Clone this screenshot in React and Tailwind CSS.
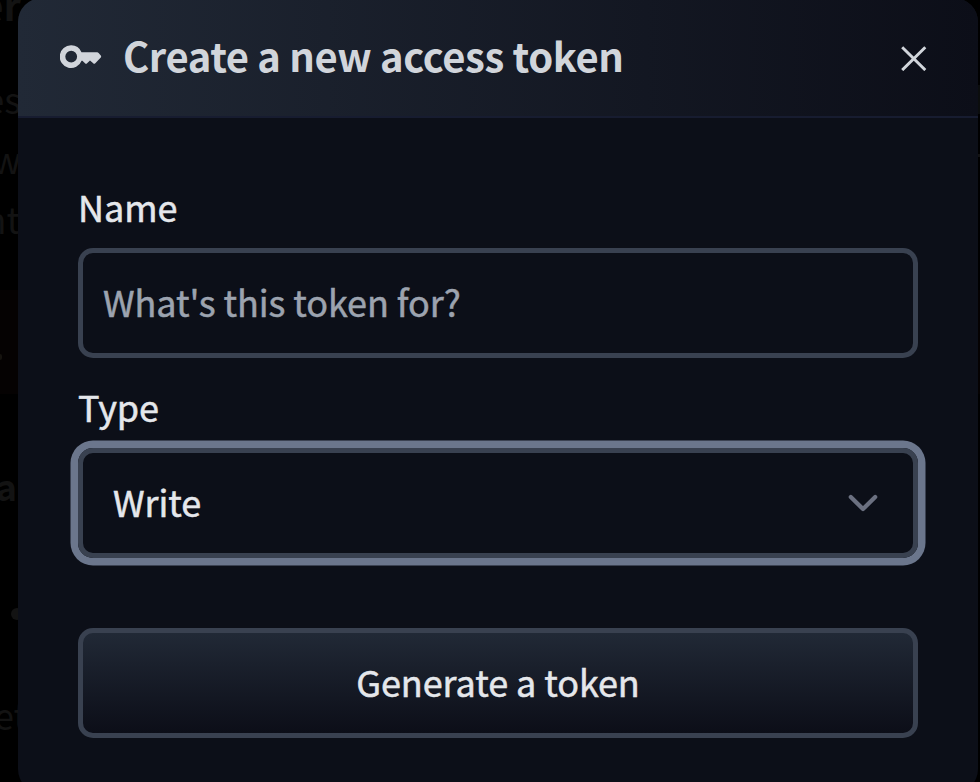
const textFont = "font-['Noto_Sans_CJK_SC','Noto_Sans',sans-serif]";

function KeyIcon() {
  return (
    <svg className="h-6 w-[42px] shrink-0" viewBox="0 0 42 24" fill="#d1d5db">
      <path
        fillRule="evenodd"
        d="M11.2 .3a11.3 11.4 0 0 1 10.3 7H37.2Q38 7.3 38.6 7.9L40.8 10.5Q41.5 11.5 40.8 12.4L35.3 18.2Q34.2 19.2 33.2 18.2L30 15.4L27.1 18.2Q26 19.2 25 18.2L22.4 15.8H21.6A11.3 11.4 0 1 1 11.2 .3ZM11.2 5.7a5.9 5.9 0 1 0 0 11.8a5.9 5.9 0 0 0 0-11.8Z"
      />
    </svg>
  );
}

function CloseIcon() {
  return (
    <svg className="h-7 w-7" viewBox="0 0 28 28" fill="none" stroke="#d1d5db" strokeWidth="2.9">
      <path d="M2.2 4.2L25.3 27.1M25.3 4.2L2.2 27.1" />
    </svg>
  );
}

function ChevronIcon() {
  return (
    <svg
      className="h-5 w-[30px]"
      viewBox="0 0 30 20"
      fill="none"
      stroke="#6b7080"
      strokeWidth="4.2"
      strokeLinecap="round"
      strokeLinejoin="round"
    >
      <path d="M2.8 3.9L15 16.1L27.2 3.9" />
    </svg>
  );
}

function Backdrop() {
  return (
    <div className="absolute inset-0 overflow-hidden whitespace-nowrap text-[36px] leading-[40px] text-[#131313]">
      <div className="absolute top-[290px] left-0 h-[104px] w-full bg-[#050202]" />
      <span className="absolute top-[-16px] right-[959px] text-[40px] font-bold">er</span>
      <span className="absolute top-[78px] right-[959px]">es</span>
      <span className="absolute top-[138px] right-[959px]">w</span>
      <span className="absolute top-[198px] right-[960px]">nt</span>
      <span className="absolute top-[465px] right-[963px] font-bold">a</span>
      <span className="absolute top-[608px] left-[11px] h-3 w-3 rounded-full bg-[#131313]" />
      <span className="absolute top-[694px] right-[953px]">et</span>
      <div className="absolute top-[354px] left-0 h-1.5 w-0.5 rounded-r bg-[#16130f]" />
      <div className="absolute top-[85px] right-0 h-[29px] w-[2px] bg-[#0b0d0d]" />
      <div className="absolute top-[154px] right-0 h-[3px] w-[2px] bg-[#131313]" />
    </div>
  );
}

export default function App() {
  return (
    <div className={`relative h-[782px] w-[980px] overflow-hidden bg-black ${textFont}`}>
      <Backdrop />
      <div className="relative -mt-[2px] ml-[18px] h-[795px] w-[960px] overflow-hidden rounded-[24px] bg-[#0c0f18]">
        <header className="flex h-[120px] items-center border-b-2 border-[#171c30] bg-gradient-to-r from-[#212936] to-[#0c0e18] pr-[50px] pl-[42px]">
          <KeyIcon />
          <h2 className="mb-1 ml-[21px] flex-1 text-[40px] leading-[60px] font-bold tracking-[-0.4px] text-[#d1d5db]">
            Create a new access token
          </h2>
          <button className="flex h-7 w-7 items-center">
            <CloseIcon />
          </button>
        </header>
        <form className="flex flex-col px-[60px] pt-[58px] text-[36px] leading-[60px] tracking-[-0.07px] text-[#e5e7eb] [-webkit-text-stroke:0.5px_currentColor]">
          <label className="flex flex-col">
            <span className="h-[72px]">Name</span>
            <span className="flex h-[110px] items-center rounded-[15px] border-5 border-[#394150] pb-1 pl-5 text-[#9ca3af]">
              What's this token for?
            </span>
          </label>
          <label className="mt-[18px] flex flex-col">
            <span className="h-[72px]">Type</span>
            <span className="flex h-[110px] items-center justify-between rounded-[15px] border-5 border-[#394150] pr-[35px] pl-[30px] shadow-[0_0_0_7.5px_#6b768c]">
              <span className="pb-1">Write</span>
              <ChevronIcon />
            </span>
          </label>
          <button
            type="button"
            className="mt-[70px] flex h-[110px] items-center justify-center rounded-[15px] border-5 border-[#394150] bg-gradient-to-b from-[#212936] to-[#0c0e18] pb-1"
          >
            Generate a token
          </button>
        </form>
      </div>
    </div>
  );
}
